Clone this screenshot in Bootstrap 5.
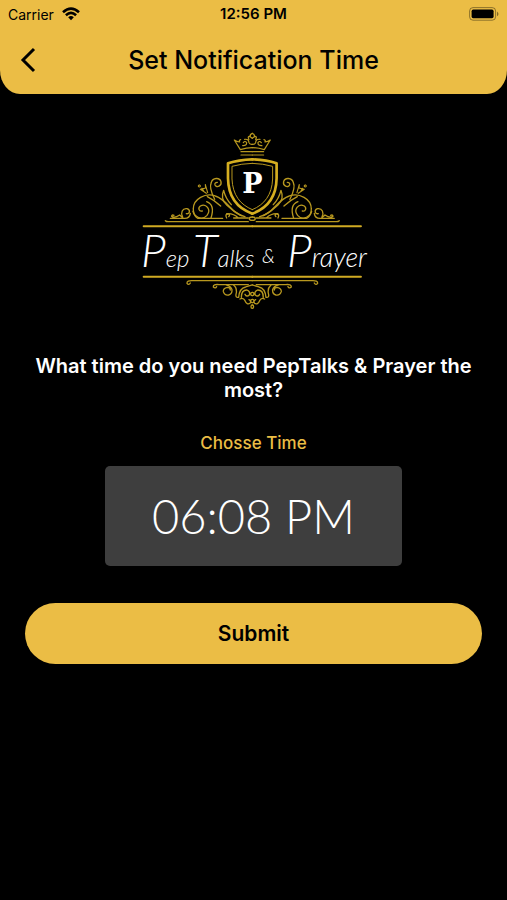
<!DOCTYPE html>
<html lang="en">
<head>
<meta charset="utf-8">
<meta name="viewport" content="width=device-width, initial-scale=1">
<title>Set Notification Time</title>
<link href="https://cdn.jsdelivr.net/npm/bootstrap@5.3.0/dist/css/bootstrap.min.css" rel="stylesheet">
<style>
  :root { --gold: #ebbd45; }
  body { font-family: Inter, "Liberation Sans", sans-serif; background: #000; }
  .top-panel { background: var(--gold); border-radius: 0 0 20px 20px / 0 0 24px 24px; padding-bottom: 12px; }
  .status-bar { height: 28px; font-size: 14px; padding: 0 8px; }
  .status-side { flex: 1 1 0; }
  .status-clock { font-size: 15px; }
  .title-bar { height: 54px; padding: 10px 16px 0; }
  .title-bar h1 { font-size: 25px; line-height: 32px; }
  .back-btn { width: 24px; height: 32px; }
  .brand-logo { width: 234px; height: 180px; margin: 36px auto 44px; }
  .question { font-size: 20px; line-height: 24px; }
  .time-label { font-size: 17px; line-height: 24px; margin: 29px 0 11px; color: var(--gold); }
  .time-btn, .time-btn:hover { background: #3e3e3e; color: #fff; border: 0; border-radius: 5px; width: 65%; height: 100px; font: 300 47px/56px Lato, sans-serif; }
  .submit-btn, .submit-btn:hover { background: var(--gold); color: #000; border: 0; height: 61px; font-size: 21px; margin-top: 37px; }
  .form-area { padding: 0 25px; }
</style>
</head>
<body class="min-vh-100">
<header class="top-panel text-black">
  <div class="status-bar d-flex align-items-center">
    <div class="status-side d-flex align-items-center gap-2">
      <span>Carrier</span>
      <svg width="18" height="14" viewBox="0 0 18 14" fill="none" stroke="#000" stroke-width="2.6" aria-hidden="true">
        <path d="M1 5.2Q9-2 17 5.2M3.9 8.2Q9 3.6 14.1 8.2"/><path d="M6.2 10.2Q9 7.8 11.8 10.2L9 13.2Z" fill="#000" stroke="none"/>
      </svg>
    </div>
    <span class="status-clock fw-semibold">12:56 PM</span>
    <div class="status-side d-flex justify-content-end">
      <svg width="30" height="14" viewBox="0 0 30 14" aria-hidden="true">
        <rect x=".6" y=".6" width="26" height="12.6" rx="3.4" fill="none" stroke="#000" stroke-opacity=".4"/>
        <rect x="2.6" y="2.6" width="22" height="8.6" rx="1.6"/><path d="M28 4.6q3 2.3 0 4.6z" opacity=".45"/>
      </svg>
    </div>
  </div>
  <div class="title-bar d-flex align-items-center">
    <button type="button" class="back-btn btn p-0 border-0 d-flex align-items-center justify-content-center" aria-label="Back">
      <svg width="16" height="26" viewBox="0 0 16 26" fill="none" stroke="#000" stroke-width="3"><path d="M14 2 3 13 14 24"/></svg>
    </button>
    <h1 class="flex-grow-1 text-center fw-medium mb-0 pe-4">Set Notification Time</h1>
  </div>
</header>

<main class="form-area text-center">
  <svg class="brand-logo d-block overflow-visible" viewBox="137 130 234 180" role="img" aria-label="Pep Talks &amp; Prayer">
    <defs>
      <g id="ornament" transform="translate(130 125) scale(.3333)" fill="none" stroke="#b8981f" stroke-width="4" stroke-linecap="round" stroke-linejoin="round">
        <path d="M367 103Q326 104 294 115V160C295 216 322 250 367 266" stroke="#d5ae20" stroke-width="8"/>
        <path d="M367 115Q334 116 306 124V162C308 209 330 239 367 254" stroke-width="3"/>
        <path d="M367 80H333M367 90H333M331 74L313 45Q320 50 329 51M329 51Q326 45 332 44M338 62Q350 63 350 53Q345 46 340 53M344 43Q356 41 357 53Q359 59 367 58M357 43Q352 36 358 34Q363 37 367 40M361 34Q359 28 367 25M331 74Q350 68 367 68" stroke-width="3.6"/>
        <path d="M345 275C304 267 295 226 256 213C226 202 190 222 190 251C188 276 216 288 231 271C245 254 228 234 211 243C203 249 207 261 217 258"/>
        <path d="M189 259Q193 274 204 280H278M230 230C246 236 252 252 243 279M254 223C247 209 237 186 244 172C248 158 269 156 273 170C276 183 260 190 255 180Q253 173 262 172"/>
        <path d="M304 239Q287 221 281 196Q270 222 290 240Q310 260 334 272M232 215Q252 225 272 243"/>
        <path d="M229 205L211 193L227 189L226 179L233 203M216 190L221 198M208 180a3 3 0 1 0 .1 0" stroke-width="3.4"/>
        <path d="M290 279Q284 267 294 267Q302 270 296 275M311 279H330M355 279H325Q310 264 290 266"/>
        <path d="M358 281a9 5 0 0 1 9 -5M358 281a9 5 0 0 0 9 5"/>
        <path d="M121 280H160L149 270Q134 280 125 274Q125 268 132 271M158 276C151 264 157 249 171 251C182 254 180 268 169 266M160 280Q179 282 181 265"/>
        <path d="M106 287Q109 290 115 290H355"/>
        <path d="M41 304H367M41 455H367" stroke="#d0aa23" stroke-width="6"/>
        <path d="M367 467H188Q170 466 171 475Q176 482 181 474M355 479H267Q249 477 250 486Q256 492 260 485"/>
        <path d="M301 495Q301 487 292 487Q279 490 280 500Q284 512 296 510Q307 507 306 494Q303 484 289 480M311 480Q323 491 318 508Q316 519 326 517Q328 490 347 486Q367 480 367 480M334 517Q334 495 350 495Q362 499 358 510Q350 517 345 508M330 522Q340 517 345 527Q351 541 360 535Q365 528 357 524M367 502a5 5 0 0 0 0 10M367 523a5 5 0 0 0 0 10M367 540a4 5 0 0 0 0 10"/>
      </g>
    </defs>
    <use href="#ornament"/>
    <use href="#ornament" transform="translate(504.6 0) scale(-1 1)"/>
    <text x="252.5" y="193" text-anchor="middle" font-family="DejaVu Serif, serif" font-weight="700" font-size="27" fill="#fff">P</text>
    <g font-family="Lato, sans-serif" font-style="italic" font-weight="300" font-size="24" fill="#fff">
      <text x="141" y="267"><tspan font-size="46">P</tspan>ep</text>
      <text x="193" y="267"><tspan font-size="46">T</tspan>alks</text>
      <text x="262" y="263" font-size="20">&amp;</text>
      <text x="287" y="267"><tspan font-size="46">P</tspan><tspan font-size="27">rayer</tspan></text>
    </g>
  </svg>
  <h2 class="question text-white fw-semibold mb-0">What time do you need PepTalks &amp; Prayer the most?</h2>
  <label for="time" class="time-label d-block fw-medium">Chosse Time</label>
  <button id="time" type="button" class="time-btn btn">06:08 PM</button>
  <button type="submit" class="submit-btn btn rounded-pill d-block w-100 fw-semibold">Submit</button>
</main>
<script src="https://cdn.jsdelivr.net/npm/bootstrap@5.3.0/dist/js/bootstrap.bundle.min.js"></script>
</body>
</html>
